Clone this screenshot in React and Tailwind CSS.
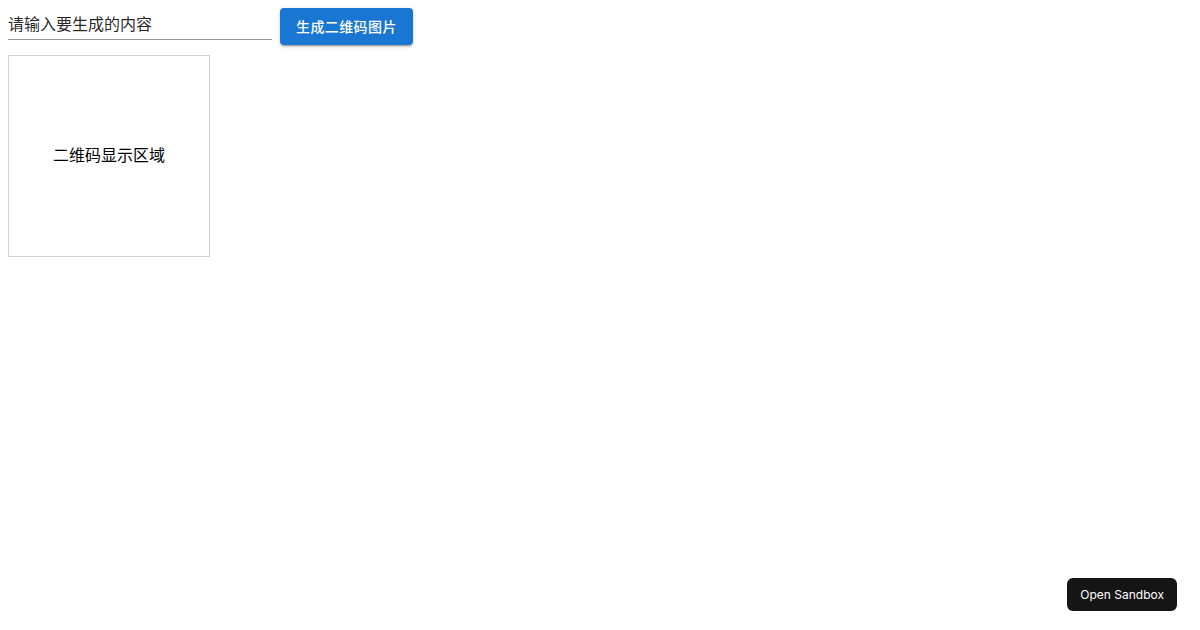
import React, { useState } from 'react';

const App = () => {
    const [text, setText] = useState('请输入要生成的内容');

    return (
        <div className="min-h-screen bg-white p-2 text-[rgba(0,0,0,0.87)] font-['Roboto','Noto_Sans_CJK_SC',sans-serif]">
            <div className="flex items-start gap-2">
                <div className="w-[264px] border-b border-[rgba(0,0,0,0.42)]">
                    <input
                        value={text}
                        onChange={(e) => setText(e.target.value)}
                        className="block w-full h-[31px] pt-1 pb-[5px] text-base outline-none bg-transparent"
                    />
                </div>
                <button className="h-[37px] px-4 rounded bg-[#1976d2] text-white text-sm font-medium tracking-[0.02857em] shadow-[0px_3px_1px_-2px_rgba(0,0,0,0.2),0px_2px_2px_0px_rgba(0,0,0,0.14),0px_1px_5px_0px_rgba(0,0,0,0.12)]">
                    生成二维码图片
                </button>
            </div>

            <div className="mt-[10px] w-[202px] h-[202px] border border-[#d3d3d3] flex items-center justify-center text-base text-black">
                二维码显示区域
            </div>

            <button className="fixed right-[23px] bottom-[19px] h-[33px] px-[13px] rounded-md bg-[#151515] text-white text-[12px] font-['Inter',sans-serif]">
                Open Sandbox
            </button>
        </div>
    );
};

export default App;
